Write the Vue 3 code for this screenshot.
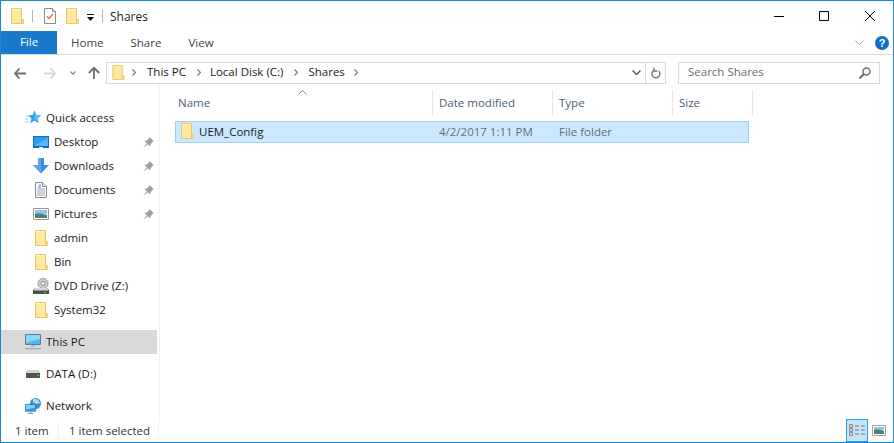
<script setup>
const places = [
  { label: 'Quick access', icon: 'star', top: true },
  { label: 'Desktop', icon: 'desktop', pin: true },
  { label: 'Downloads', icon: 'downloads', pin: true },
  { label: 'Documents', icon: 'documents', pin: true },
  { label: 'Pictures', icon: 'pictures', pin: true },
  { label: 'admin', icon: 'folder' },
  { label: 'Bin', icon: 'folder' },
  { label: 'DVD Drive (Z:)', icon: 'dvd' },
  { label: 'System32', icon: 'folder' },
  { label: 'This PC', icon: 'pc', top: true, selected: true, gap: true },
  { label: 'DATA (D:)', icon: 'disk', top: true, gap: true },
  { label: 'Network', icon: 'network', top: true, gap: true },
]
const columns = [
  { label: 'Name', width: 273, pad: 18 },
  { label: 'Date modified', width: 120, pad: 6 },
  { label: 'Type', width: 120, pad: 6 },
  { label: 'Size', width: 80, pad: 6 },
]
</script>

<template>
  <div class="explorer">
    <svg class="defs" aria-hidden="true">
      <symbol id="folder" viewBox="0 0 14 16">
        <path d="M1.500 .5h10v15h-10z" fill="#ffe8a0" stroke="#e8c766" />
        <path d="M11.500 11.500h2v4h-2z" fill="#ffe08a" stroke="#e8c766" />
        <path d="M2 1h9v1H2z" fill="#fff3c9" />
      </symbol>
      <symbol id="star" viewBox="0 0 16 16">
        <path d="M9.500 .5l1.800 4.500 4.700.3-3.600 3.100 1.200 4.900-4.100-2.700-4.200 2.700 1.200-4.700-3.500-3.200 4.700-.3z" fill="#2f9fe8" />
        <path d="M9.500 .5l1.800 4.500 4.700.3-6.500 5.400z" fill="#5cb8f0" />
        <path d="M4 6H1M3 9H0M3 12H0" stroke="#8cc8ee" />
      </symbol>
      <symbol id="desktop" viewBox="0 0 16 12">
        <path d="M0 0h16v12H0z" fill="#0a6cc4" />
        <path d="M1 1h14v9H1z" fill="#2f9bf0" />
        <path d="M1 10l14-8v8z" fill="#58b4f6" />
        <path d="M6 11h4v1H6z" fill="#dfeefb" />
      </symbol>
      <symbol id="downloads" viewBox="0 0 16 16">
        <path d="M5 0h6v7h5l-8 8.500L0 7h5z" fill="#3c8ee0" />
        <path d="M5 0h3v15L0 7h5z" fill="#5aa5ec" />
      </symbol>
      <symbol id="documents" viewBox="0 0 12 16">
        <path d="M.5.500h7l4 4v11H.5z" fill="#fff" stroke="#8b8b8b" />
        <path d="M7.500.500v4h4" fill="#e6e6e6" stroke="#8b8b8b" />
        <path d="M2 7h8M2 9h8M2 11h8M2 13h8" stroke="#9aa8b5" />
        <path d="M3 5h3M4 3h2" stroke="#2f80d0" />
      </symbol>
      <symbol id="pictures" viewBox="0 0 16 12">
        <path d="M.5.500h15v11H.5z" fill="#fff" stroke="#9a9a9a" />
        <path d="M2 2h12v4H2z" fill="#8ec5ee" />
        <path d="M2 6c4-1 8 0 12 1v3H2z" fill="#4f7f72" />
      </symbol>
      <symbol id="dvd" viewBox="0 0 16 16">
        <circle cx="10" cy="5.500" r="5" fill="#cfcfcf" stroke="#9a9a9a" />
        <circle cx="10" cy="5.500" r="2" fill="#f4f4f4" stroke="#8d8d8d" />
        <path d="M2 10h12l2 2v4H0v-4z" fill="#4e4e4e" />
        <path d="M2 10h12l1.500 2.500H.5z" fill="#d8d8d8" />
        <path d="M11 14h2v1h-2z" fill="#58d24e" />
      </symbol>
      <symbol id="pc" viewBox="0 0 16 16">
        <path d="M.5.500h15v10H.5z" fill="#4db8ee" stroke="#5c7f98" />
        <path d="M1 1h14v4L1 9z" fill="#8ad8fa" />
        <path d="M6 11h4v2H6z" fill="#a9bccb" />
        <path d="M0 14h16v1.500H0z" fill="#9fb4c6" />
      </symbol>
      <symbol id="disk" viewBox="0 0 14 8">
        <path d="M2 0h10l2 3v5H0V3z" fill="#555" />
        <path d="M2 0h10l2 3H0z" fill="#d2d2d2" />
        <path d="M11 5h2v1h-2z" fill="#58d24e" />
      </symbol>
      <symbol id="network" viewBox="0 0 16 16">
        <circle cx="10.500" cy="5.500" r="5.500" fill="#3f8fd0" />
        <path d="M8 1c3-1 6 1 7 4l-4 1-3-2z" fill="#b8d6ea" />
        <path d="M.3 6.300h10.400v7H.3z" fill="#2f9fe8" stroke="#1f6f9f" stroke-width=".6" />
        <path d="M1 7h9v2.500l-9 2z" fill="#7fd0f5" />
        <path d="M4 13.500h3v1H4zM2.500 15h6v1h-6z" fill="#8aa0ad" />
      </symbol>
      <symbol id="pin" viewBox="0 0 11 11">
        <path d="M6.500 0L11 4.500 9.500 5 7.500 7.500 7 9.500 1.500 4 3.500 3.500 6 1.500z" fill="#9aa0a6" />
        <path d="M3.500 6.500L0 11l4.500-3.500z" fill="#9aa0a6" />
      </symbol>
    </svg>

    <div class="titlebar">
      <svg class="folder-icon"><use href="#folder" /></svg>
      <i class="qa-sep"></i>
      <svg class="note-icon" viewBox="0 0 12 16">
        <path d="M.5.500h8l3 3v12H.5z" fill="#fdfdfd" stroke="#8a8a8a" />
        <path d="M8.500.500v3h3" fill="#e4e4e4" stroke="#8a8a8a" />
        <path d="M3 8.500l2 2L9 6" fill="none" stroke="#e2603a" stroke-width="1.200" />
      </svg>
      <svg class="folder-icon second"><use href="#folder" /></svg>
      <svg class="qa-arrow" viewBox="0 0 7 7">
        <path d="M0 0h7v1H0zM0 3h7L3.500 7z" fill="#111" />
      </svg>
      <i class="qa-sep last"></i>
      <span class="title">Shares</span>
      <div class="window-buttons">
        <svg viewBox="0 0 10 10"><path d="M0 5.500h10" stroke="#000" /></svg>
        <svg viewBox="0 0 10 10"><path d="M.5.500h9v9h-9z" fill="none" stroke="#000" /></svg>
        <svg class="close" viewBox="0 0 10 10"><path d="M0 0l10 10M10 0L0 10" stroke="#000" /></svg>
      </div>
    </div>

    <div class="ribbon">
      <span class="tab-file">File</span>
      <span class="tab home">Home</span>
      <span class="tab share">Share</span>
      <span class="tab view">View</span>
      <svg class="ribbon-chevron" viewBox="0 0 9 5">
        <path d="M.5.500l4 4 4-4" fill="none" stroke="#a8a8a8" />
      </svg>
      <span class="help">?</span>
    </div>

    <div class="navbar">
      <svg class="nav-arrow back" viewBox="0 0 12 11">
        <path d="M5.500.500L1 5.500l4.500 5M1 5.500h11" fill="none" stroke="#6e6e6e" stroke-width="1.800" />
      </svg>
      <svg class="nav-arrow forward" viewBox="0 0 12 11">
        <path d="M6.500.500l4.500 5-4.500 5M11 5.500H0" fill="none" stroke="#d6d6d6" stroke-width="1.800" />
      </svg>
      <svg class="nav-chevron" viewBox="0 0 6 4">
        <path d="M.5.500L3 3.200 5.500.500" fill="none" stroke="#8a8a8a" stroke-width="1.200" />
      </svg>
      <svg class="nav-arrow up" viewBox="0 0 12 12">
        <path d="M.8 6L6 .8 11.200 6M6 1v11" fill="none" stroke="#6e6e6e" stroke-width="1.800" />
      </svg>
      <div class="address">
        <svg class="folder-icon"><use href="#folder" /></svg>
        <svg class="crumb-arrow first" viewBox="0 0 4 7"><path d="M.5.500l3 3-3 3" fill="none" stroke="#777" stroke-width="1.200" /></svg>
        <span class="crumb pc">This PC</span>
        <svg class="crumb-arrow" viewBox="0 0 4 7"><path d="M.5.500l3 3-3 3" fill="none" stroke="#777" stroke-width="1.200" /></svg>
        <span class="crumb disk">Local Disk (C:)</span>
        <svg class="crumb-arrow" viewBox="0 0 4 7"><path d="M.5.500l3 3-3 3" fill="none" stroke="#777" stroke-width="1.200" /></svg>
        <span class="crumb shares">Shares</span>
        <svg class="crumb-arrow" viewBox="0 0 4 7"><path d="M.5.500l3 3-3 3" fill="none" stroke="#777" stroke-width="1.200" /></svg>
        <svg class="address-chevron" viewBox="0 0 9 5"><path d="M.5.500l4 4 4-4" fill="none" stroke="#555" stroke-width="1.400" /></svg>
        <span class="refresh">
          <svg viewBox="0 0 10 12">
            <path d="M7.800 4A4 4 0 1 1 2.800 3.400M3 .5v3.500h3.500" fill="none" stroke="#777" stroke-width="1.400" />
          </svg>
        </span>
      </div>
      <div class="search">
        <span>Search Shares</span>
        <svg viewBox="0 0 12 12">
          <circle cx="7.500" cy="4.500" r="3.500" fill="none" stroke="#6e6e6e" stroke-width="1.500" />
          <path d="M5 7l-4.500 4.500" stroke="#6e6e6e" stroke-width="2" />
        </svg>
      </div>
    </div>

    <div class="body">
      <nav class="sidebar">
        <div
          v-for="place in places"
          :key="place.label"
          class="place"
          :class="{ top: place.top, selected: place.selected, gap: place.gap }"
        >
          <span class="place-icon"><svg :class="'i-' + place.icon"><use :href="'#' + place.icon" /></svg></span>
          <span class="place-label">{{ place.label }}</span>
          <svg v-if="place.pin" class="pin"><use href="#pin" /></svg>
        </div>
      </nav>

      <main class="files">
        <div class="columns">
          <span
            v-for="col in columns"
            :key="col.label"
            class="column"
            :style="{ width: col.width + 'px', paddingLeft: col.pad + 'px' }"
          >{{ col.label }}</span>
          <svg class="sort" viewBox="0 0 9 5"><path d="M.5 4.500l4-4 4 4" fill="none" stroke="#888" /></svg>
        </div>
        <div class="file-row">
          <span class="cell name">
            <svg class="folder-icon"><use href="#folder" /></svg>
            UEM_Config
          </span>
          <span class="cell date">4/2/2017 1:11 PM</span>
          <span class="cell type">File folder</span>
        </div>
      </main>
    </div>

    <footer class="statusbar">
      <span class="count">1 item</span>
      <span class="selected-count">1 item selected</span>
      <div class="views">
        <span class="view-btn active">
          <svg viewBox="0 0 17 13">
            <path d="M.5.500h3v3h-3zM.5 4.500h3v3h-3zM.5 8.500h3v3h-3z" fill="#fff" stroke="#8a8a8a" />
            <path d="M1.500 1.500h1v1h-1z" fill="#555" />
            <path d="M1.500 5.500h1v1h-1z" fill="#3a78c8" />
            <path d="M1.500 9.500h1v1h-1z" fill="#c8323a" />
            <path d="M6 2h4M12 2h4M6 6h4M12 6h4M6 10h4M12 10h4" stroke="#777" />
          </svg>
        </span>
        <span class="view-btn plain">
          <svg viewBox="0 0 14 11">
            <path d="M.5.500h13v10H.5z" fill="#fff" stroke="#a0a0a0" />
            <path d="M2 2h10v3H2z" fill="#8ec5ee" />
            <path d="M2 5c4-1 7 0 10 1v3H2z" fill="#4f7f72" />
          </svg>
        </span>
      </div>
    </footer>
  </div>
</template>

<style scoped>
.explorer {
  width: 894px;
  height: 443px;
  box-sizing: border-box;
  border: 1px solid #1a86d6;
  background: #fff;
  display: flex;
  flex-direction: column;
  overflow: hidden;
  font-family: "Open Sans", "Noto Sans", sans-serif;
  font-size: 11.5px;
  color: #1a1a1a;
}
.defs {
  position: absolute;
  width: 0;
  height: 0;
}
svg {
  display: block;
  flex: none;
}
.folder-icon {
  width: 14px;
  height: 16px;
}

.titlebar {
  height: 30px;
  display: flex;
  align-items: center;
  padding-left: 9px;
}
.qa-sep {
  width: 1px;
  height: 12px;
  background: #b5b5b5;
  margin: 0 11px 0 8px;
}
.note-icon {
  width: 12px;
  height: 16px;
}
.folder-icon.second {
  margin-left: 9px;
}
.qa-arrow {
  width: 7px;
  height: 7px;
  margin-left: 8px;
  margin-top: 2px;
}
.qa-sep.last {
  margin: 0 7px 0 8px;
}
.title {
  font-size: 12px;
}
.window-buttons {
  margin-left: auto;
  display: flex;
  gap: 35px;
  margin-right: 18px;
}
.window-buttons svg {
  width: 10px;
  height: 10px;
}
.window-buttons .close {
  margin-left: 1px;
}

.ribbon {
  height: 23px;
  border-bottom: 1px solid #dadbdc;
  display: flex;
  align-items: center;
  color: #444;
}
.tab-file {
  width: 56px;
  height: 23px;
  line-height: 22px;
  background: #1979ca;
  color: #fff;
  text-align: center;
}
.tab.home {
  margin-left: 14px;
}
.tab.share {
  margin-left: 27px;
}
.tab.view {
  margin-left: 27px;
}
.ribbon-chevron {
  width: 9px;
  height: 5px;
  margin-left: auto;
}
.help {
  width: 14px;
  height: 14px;
  margin: 0 4px 0 11px;
  border-radius: 50%;
  background: #0f6fc6;
  color: #fff;
  font: bold 11px/14px "Liberation Sans", sans-serif;
  text-align: center;
}

.navbar {
  height: 30px;
  box-sizing: border-box;
  padding-top: 6px;
  display: flex;
  align-items: center;
}
.nav-arrow {
  width: 12px;
  height: 11px;
}
.nav-arrow.back {
  margin-left: 13px;
}
.nav-arrow.forward {
  margin-left: 18px;
}
.nav-chevron {
  width: 6px;
  height: 4px;
  margin-left: 14px;
}
.nav-arrow.up {
  height: 12px;
  margin-left: 12px;
}
.address {
  width: 560px;
  height: 22px;
  margin-left: 6px;
  box-sizing: border-box;
  border: 1px solid #d9d9d9;
  display: flex;
  align-items: center;
  padding-left: 4px;
  font-size: 11.5px;
}
.address .folder-icon {
  height: 15px;
  margin-bottom: 2px;
}
.crumb-arrow {
  width: 4px;
  height: 7px;
  margin-bottom: 2px;
}
.crumb-arrow.first {
  margin-left: 7px;
}
.crumb {
  margin: 0 11px 0 9px;
  padding-bottom: 4px;
}
.crumb.pc {
  margin-left: 11px;
}
.crumb.shares {
  margin: 0 9px 0 10px;
}
.address-chevron {
  width: 9px;
  height: 5px;
  margin-left: auto;
  margin-bottom: 2px;
}
.refresh {
  width: 19px;
  height: 20px;
  margin-left: 4px;
  border-left: 1px solid #d9d9d9;
  display: flex;
  align-items: center;
  justify-content: center;
}
.refresh svg {
  width: 10px;
  height: 12px;
}
.search {
  width: 202px;
  height: 22px;
  margin-left: 12px;
  box-sizing: border-box;
  border: 1px solid #d9d9d9;
  display: flex;
  align-items: center;
  justify-content: space-between;
  padding: 0 8px 0 9px;
  color: #6d6d6d;
}
.search span {
  padding-bottom: 3px;
}
.search svg {
  width: 12px;
  height: 12px;
}

.body {
  flex: 1;
  min-height: 0;
  display: flex;
}
.sidebar {
  width: 158px;
  border-right: 1px solid #f2f2f2;
  padding-top: 21px;
  box-sizing: content-box;
}
.place {
  width: 156px;
  height: 24px;
  display: flex;
  align-items: center;
  padding-left: 32px;
  box-sizing: border-box;
}
.place.top {
  padding-left: 24px;
}
.place.gap {
  margin-top: 8px;
}
.place.selected {
  background: #d9d9d9;
}
.place-icon {
  width: 16px;
  height: 16px;
  display: flex;
  align-items: center;
  justify-content: center;
}
.place-icon svg {
  width: 16px;
  height: 16px;
}
.place-icon .i-folder {
  width: 14px;
}
.place-icon .i-desktop {
  height: 12px;
}
.place-icon .i-documents {
  width: 12px;
}
.place-icon .i-pictures {
  height: 12px;
}
.place-icon .i-disk {
  width: 14px;
  height: 8px;
}
.place-label {
  margin-left: 5px;
  padding-bottom: 2px;
}
.pin {
  width: 11px;
  height: 11px;
  margin-left: auto;
  margin-right: 3px;
}

.files {
  flex: 1;
  min-width: 0;
}
.columns {
  margin-top: 5px;
  height: 25px;
  display: flex;
  position: relative;
}
.column {
  box-sizing: border-box;
  border-right: 1px solid #e5e5e5;
  line-height: 25px;
  color: #4c607a;
}
.sort {
  position: absolute;
  left: 138px;
  top: 0;
  width: 9px;
  height: 5px;
}
.file-row {
  margin: 6px 0 0 15px;
  width: 574px;
  height: 22px;
  box-sizing: border-box;
  border: 1px solid #99d1ff;
  background: #cce8ff;
  display: flex;
  align-items: center;
  padding-bottom: 2px;
}
.cell {
  box-sizing: border-box;
  padding-left: 6px;
  color: #6d6d6d;
}
.cell.name {
  width: 257px;
  padding-left: 4px;
  display: flex;
  align-items: center;
  gap: 5px;
  color: #1a1a1a;
}
.cell.date,
.cell.type {
  width: 120px;
}

.statusbar {
  height: 21px;
  display: flex;
  align-items: center;
  color: #333;
}
.count {
  width: 58px;
  padding: 0 0 2px 14px;
  box-sizing: border-box;
  border-right: 1px solid #f0f0f0;
}
.selected-count {
  width: 100px;
  padding: 0 0 2px 10px;
  box-sizing: border-box;
  border-right: 1px solid #f0f0f0;
}
.views {
  margin-left: auto;
  margin-right: 7px;
  height: 21px;
  display: flex;
  align-items: flex-end;
  gap: 4px;
}
.view-btn {
  display: flex;
  align-items: center;
  justify-content: center;
}
.view-btn.active {
  width: 22px;
  height: 23px;
  box-sizing: border-box;
  background: #c6e4f8;
  border: 1px solid #2a9ce0;
}
.view-btn.plain {
  width: 14px;
  height: 23px;
}
.view-btn svg {
  width: 17px;
  height: 13px;
}
.view-btn.plain svg {
  width: 14px;
  height: 11px;
}
</style>
